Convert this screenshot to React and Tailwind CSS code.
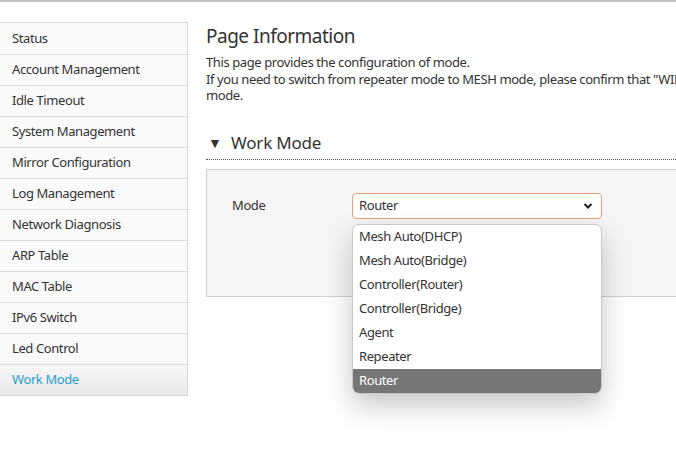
import React from "react";

const items = [
  "Status",
  "Account Management",
  "Idle Timeout",
  "System Management",
  "Mirror Configuration",
  "Log Management",
  "Network Diagnosis",
  "ARP Table",
  "MAC Table",
  "IPv6 Switch",
  "Led Control",
  "Work Mode",
];

const options = [
  "Mesh Auto(DHCP)",
  "Mesh Auto(Bridge)",
  "Controller(Router)",
  "Controller(Bridge)",
  "Agent",
  "Repeater",
  "Router",
];

export default function App() {
  return (
    <div
      className="w-[676px] h-[461px] overflow-hidden bg-white text-[#333] relative tracking-[-0.4px]"
      style={{ fontFamily: '"Noto Sans", "Open Sans", sans-serif' }}
    >
      <div className="h-[2px] bg-[#c4c4c4]" />
      <div className="flex items-start pt-[20px]">
        <div className="w-[188px] shrink-0 border border-l-0 border-[#d6d6d6] bg-[#fafafa]">
          {items.map((it, i) => {
            const active = it === "Work Mode";
            return (
              <div
                key={it}
                className={
                  "h-[31px] flex items-center pl-[12px] text-[13px] " +
                  (i > 0 ? "border-t border-[#dcdcdc] " : "") +
                  (active
                    ? "text-[#2a9bd1] bg-gradient-to-b from-[#f7f7f7] to-[#e8e8e8]"
                    : "")
                }
              >
                {it}
              </div>
            );
          })}
        </div>
        <div className="ml-[18px] w-[900px] shrink-0">
          <div className="text-[19px] leading-[24px] mt-[2px] tracking-[-0.5px]">Page Information</div>
          <div className="text-[13px] leading-[16.5px] mt-[6px] w-[680px]">
            <div>This page provides the configuration of mode.</div>
            <div>
              If you need to switch from repeater mode to MESH mode, please confirm that "WIFI Setting" is in mode.
            </div>
            <div>mode.</div>
          </div>
          <div className="mt-[27px] flex items-center h-[24px]">
            <span className="text-[14px] ml-[2px] w-[23px]">▼</span>
            <span className="text-[17px] tracking-[-0.2px]">Work Mode</span>
          </div>
          <div className="mt-[4px] border-b border-dotted border-[#555]" />
          <div className="mt-[9px] h-[128px] border border-[#cfcfcf] bg-[#f5f5f5] relative">
            <div className="flex items-center mt-[23px]">
              <div className="w-[145px] pl-[25px] text-[13px]">Mode</div>
              <div className="w-[250px] h-[26px] border border-[#e79f78] rounded-[4px] bg-white flex items-center justify-between pl-[6px] pr-[8px] text-[13px]">
                <span>Router</span>
                <svg width="10" height="8" viewBox="0 0 10 8">
                  <path d="M1.5 2 L5 5.5 L8.5 2" fill="none" stroke="#222" strokeWidth="2" />
                </svg>
              </div>
            </div>
            <div className="absolute left-[145px] top-[54px] w-[250px] bg-white border border-[#c8c8c8] rounded-[7px] overflow-hidden shadow-[0_12px_28px_rgba(0,0,0,0.22)] z-10">
              {options.map((o) => (
                <div
                  key={o}
                  className={
                    "h-[24px] flex items-center pl-[6px] text-[13px] " +
                    (o === "Router" ? "bg-[#767676] text-white" : "")
                  }
                >
                  {o}
                </div>
              ))}
            </div>
          </div>
        </div>
      </div>
    </div>
  );
}
